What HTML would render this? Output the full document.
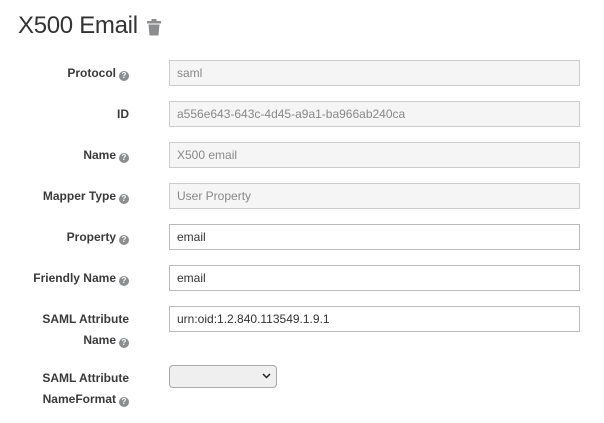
<!DOCTYPE html>
<html><head><style>
body{margin:0;background:#fff;font-family:"Liberation Sans",sans-serif;color:#363636;width:604px;height:423px;overflow:hidden;position:relative}
h1{position:absolute;left:18px;top:12px;margin:0;font-weight:normal;font-size:24px;color:#333;letter-spacing:-0.3px}
.trash{position:absolute;left:147px;top:19px}
.lbl{position:absolute;right:475px;font-size:12px;font-weight:bold;text-align:right;line-height:21px;color:#3a3a3a}
.q{display:inline-block;width:10px;height:10px;border-radius:50%;background:#8b8d8f;color:#fff;font-size:8px;line-height:10px;text-align:center;vertical-align:-1px;margin-left:3px;font-weight:bold}
.in{position:absolute;left:169px;width:402px;height:24px;border:1px solid #bbb;padding-left:7px;font-size:12px;line-height:24px;color:#333;background:#fff}
.ro{background:#f5f5f5;color:#888;border-color:#ccc}
.sel{position:absolute;left:169px;top:365px;width:106px;height:21px;border:1px solid #aaa;border-radius:4px;background:#efefef}
</style></head><body>
<h1>X500 Email</h1>
<svg class="trash" width="14" height="17" viewBox="0 0 14 17"><rect x="0" y="2" width="14" height="2.5" fill="#8b8d8f"/><rect x="4.5" y="0" width="5" height="3" fill="#8b8d8f"/><path d="M1.5 5.5h11l-1 11h-9z" fill="#8b8d8f"/></svg>

<div class="lbl" style="top:63px">Protocol<span class="q">?</span></div>
<div class="in ro" style="top:60px">saml</div>
<div class="lbl" style="top:104px">ID</div>
<div class="in ro" style="top:101px">a556e643-643c-4d45-a9a1-ba966ab240ca</div>
<div class="lbl" style="top:145px">Name<span class="q">?</span></div>
<div class="in ro" style="top:142px">X500 email</div>
<div class="lbl" style="top:186px">Mapper Type<span class="q">?</span></div>
<div class="in ro" style="top:183px">User Property</div>
<div class="lbl" style="top:227px">Property<span class="q">?</span></div>
<div class="in" style="top:224px">email</div>
<div class="lbl" style="top:268px">Friendly Name<span class="q">?</span></div>
<div class="in" style="top:265px">email</div>
<div class="lbl" style="top:309px">SAML Attribute<br>Name<span class="q">?</span></div>
<div class="in" style="top:306px">urn:oid:1.2.840.113549.1.9.1</div>
<div class="lbl" style="top:368px">SAML Attribute<br>NameFormat<span class="q">?</span></div>
<div class="sel"><svg style="position:absolute;left:92px;top:7px" width="9" height="6" viewBox="0 0 9 6"><path d="M1 1l3.5 3.5L8 1" stroke="#222" stroke-width="1.5" fill="none"/></svg></div>
</body></html>
